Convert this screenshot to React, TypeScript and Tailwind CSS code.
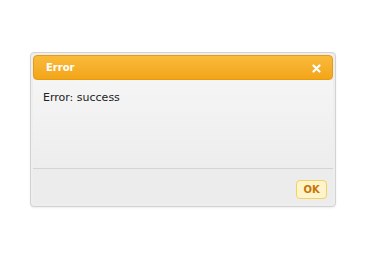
export default function App() {
  return (
    <div className="h-[256px] w-[374px] bg-white pl-[30px] pt-[52px] font-['DejaVu_Sans',sans-serif]">
      <div className="flex h-[155px] w-[306px] flex-col rounded-[4px] border border-[#d3d3d3] bg-[#eeeeee] p-[2px] shadow-[0_1px_2px_rgba(0,0,0,0.08)]">
        {/* title bar */}
        <div className="flex h-[25px] shrink-0 items-center justify-between rounded-[4px] border border-[#e59b12] bg-gradient-to-b from-[#f9ba3a] to-[#f3a516] pl-[12px] pr-[11px]">
          <span className="text-[10px] font-bold leading-none text-white">Error</span>
          <svg width="9" height="9" viewBox="0 0 9 9" className="mt-px">
            <path d="M1.5 1.5 L7.5 7.5 M7.5 1.5 L1.5 7.5" stroke="#ffffff" strokeWidth="2.2" strokeLinecap="round" />
          </svg>
        </div>
        {/* content */}
        <div className="flex-1 bg-gradient-to-b from-[#f5f5f5] to-[#ededed] pl-[10px] pt-[10px]">
          <p className="text-[11px] leading-[16px] text-[#222222]">Error: success</p>
        </div>
        {/* button pane */}
        <div className="flex h-[36px] shrink-0 items-start justify-end border-t border-[#d4d4d4] bg-[#ececec] pr-[6px] pt-[11px]">
          <button className="flex h-[19px] w-[31px] items-center justify-center rounded-[4px] border border-[#f5d25e] bg-[#fdf4cc] text-[10px] font-bold leading-none text-[#c77405]">
            OK
          </button>
        </div>
      </div>
    </div>
  )
}
